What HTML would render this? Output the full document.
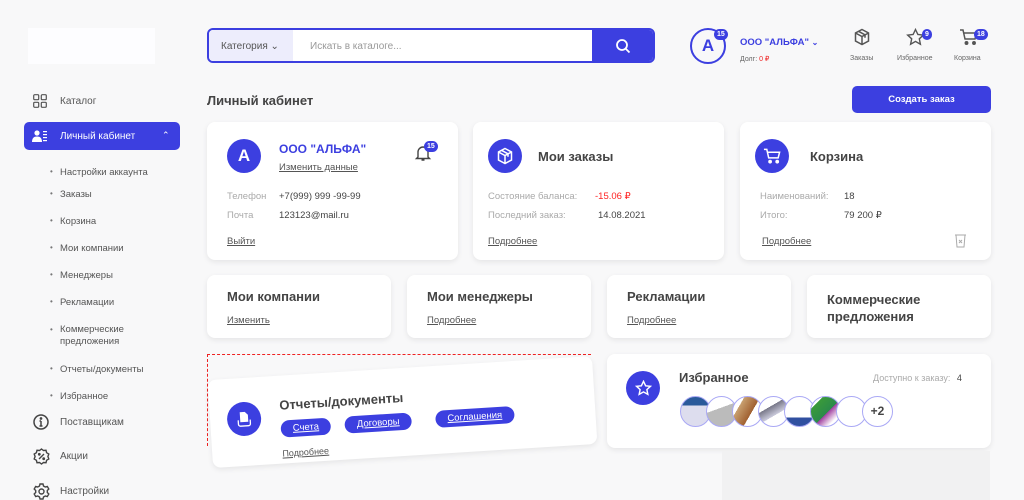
<!DOCTYPE html>
<html><head><meta charset="utf-8"><style>
*{margin:0;padding:0;box-sizing:border-box}
body{width:1024px;height:500px;overflow:hidden;background:#f8f8f9;font-family:"Liberation Sans",sans-serif;color:#444;position:relative;font-size:10px}
.a{position:absolute}
.card{position:absolute;background:#fff;border-radius:8px;box-shadow:0 2px 6px rgba(0,0,0,.08)}
.blue{color:#3c3fe0}
.u{text-decoration:underline;color:#555}
.circ{position:absolute;width:34px;height:34px;border-radius:50%;background:#3c3fe0;display:flex;align-items:center;justify-content:center;color:#fff}
.h{font-size:13px;font-weight:bold;color:#444}
.g{color:#aaa}
.badge{position:absolute;background:#3c3fe0;color:#fff;font-size:7px;font-weight:bold;border-radius:7px;padding:1px 3px;line-height:9px}
.sub{position:absolute;left:60px;font-size:9.5px;color:#555}
.sub:before{content:"•";position:absolute;left:-10px;font-size:8px;color:#777}
.pill{display:inline-block;background:#3c3fe0;color:#fff;border-radius:9px;padding:3px 12px;font-size:9.5px;text-decoration:underline;margin-right:10px}
.av{width:31px;height:31px;border-radius:50%;border:1.5px solid #a9a8f5;margin-right:-5px;display:inline-block;background:#eee;position:relative}
</style></head><body>
<div class="a" style="left:28px;top:28px;width:127px;height:36px;background:#fdfdff"></div>
<!-- search -->
<div class="a" style="left:207px;top:28px;width:448px;height:35px;border:2px solid #3c3fe0;border-radius:6px;background:#fff;overflow:hidden">
<div class="a" style="left:0;top:0;width:84px;height:31px;background:#ededfc;font-size:10px;color:#555;padding:11px 0 0 12px">Категория ⌄</div>
<div class="a" style="left:101px;top:11px;color:#999;font-size:10px">Искать в каталоге...</div>
<div class="a" style="right:0;top:0;width:61px;height:31px;background:#3c3fe0">
<svg class="a" style="left:23px;top:8px" width="16" height="16" viewBox="0 0 16 16"><circle cx="7" cy="7" r="5" fill="none" stroke="#fff" stroke-width="1.8"/><path d="M11 11l3.5 3.5" stroke="#fff" stroke-width="1.8"/></svg></div>
</div>
<!-- header user -->
<div class="a" style="left:690px;top:28px;width:36px;height:36px;border:2px solid #3c3fe0;border-radius:50%;color:#3c3fe0;font-size:17px;font-weight:bold;text-align:center;line-height:32px">A</div>
<div class="badge" style="left:714px;top:29px">15</div>
<div class="a blue" style="left:740px;top:37px;font-size:9.5px;font-weight:bold">ООО "АЛЬФА" <span style="font-size:8px">⌄</span></div>
<div class="a" style="left:740px;top:55px;font-size:7px;color:#666">Долг: <span style="color:#e22">0 ₽</span></div>
<svg class="a" style="left:853px;top:28px" width="18" height="18" viewBox="0 0 18 18" fill="none" stroke="#555" stroke-width="1.5"><path d="M9 1.5l6.5 3.5v8L9 16.5 2.5 13V5z M2.5 5L9 8.5l6.5-3.5 M9 8.5v8 M5.5 3.3l6.5 3.5v3"/></svg>
<div class="a" style="left:850px;top:55px;font-size:7px;color:#666">Заказы</div>
<svg class="a" style="left:906px;top:28px" width="19" height="18" viewBox="0 0 19 18" fill="none" stroke="#555" stroke-width="1.4"><path d="M9.5 1.5l2.4 5 5.4.6-4 3.7 1.1 5.4-4.9-2.8-4.9 2.8 1.1-5.4-4-3.7 5.4-.6z"/></svg>
<div class="badge" style="left:922px;top:29px">9</div>
<div class="a" style="left:897px;top:55px;font-size:7px;color:#666">Избранное</div>
<svg class="a" style="left:959px;top:28px" width="19" height="18" viewBox="0 0 19 18" fill="none" stroke="#555" stroke-width="1.5"><path d="M1 2h3l2 9h10l1.5-6H5"/><circle cx="7.5" cy="15" r="1.2" fill="#555"/><circle cx="15" cy="15" r="1.2" fill="#555"/></svg>
<div class="badge" style="left:974px;top:29px">18</div>
<div class="a" style="left:954px;top:55px;font-size:7px;color:#666">Корзина</div>
<!-- sidebar -->
<svg class="a" style="left:33px;top:94px" width="14" height="14" viewBox="0 0 14 14" fill="none" stroke="#555" stroke-width="1.2"><rect x=".7" y=".7" width="5" height="5" rx="1"/><rect x="8.3" y=".7" width="5" height="5" rx="1"/><rect x=".7" y="8.3" width="5" height="5" rx="1"/><rect x="8.3" y="8.3" width="5" height="5" rx="1"/></svg>
<div class="a" style="left:60px;top:96px;font-size:10px;color:#555">Каталог</div>
<div class="a" style="left:24px;top:122px;width:156px;height:28px;background:#3c3fe0;border-radius:5px;color:#fff">
<svg class="a" style="left:8px;top:8px" width="15" height="12" viewBox="0 0 15 12" fill="#fff"><circle cx="5" cy="3" r="2.6"/><path d="M0 12c0-4 2-5.5 5-5.5s5 1.5 5 5.5z"/><rect x="11" y="1" width="4" height="1.2"/><rect x="11" y="4" width="4" height="1.2"/><rect x="11" y="7" width="4" height="1.2"/><rect x="11" y="10" width="4" height="1.2"/></svg>
<div class="a" style="left:36px;top:9px;font-size:10px">Личный кабинет</div>
<div class="a" style="left:138px;top:8px;font-size:9px">⌃</div></div>
<div class="sub" style="top:167px">Настройки аккаунта</div>
<div class="sub" style="top:189px">Заказы</div>
<div class="sub" style="top:216px">Корзина</div>
<div class="sub" style="top:243px">Мои компании</div>
<div class="sub" style="top:270px">Менеджеры</div>
<div class="sub" style="top:297px">Рекламации</div>
<div class="sub" style="top:324px;line-height:12px">Коммерческие<br>предложения</div>
<div class="sub" style="top:364px">Отчеты/документы</div>
<div class="sub" style="top:391px">Избранное</div>
<svg class="a" style="left:33px;top:414px" width="16" height="16" viewBox="0 0 16 16" fill="none" stroke="#444" stroke-width="1.5"><circle cx="8" cy="8" r="7"/><path d="M8 7v5M6.5 7H8M6.5 12h3"/><circle cx="8" cy="4.5" r=".6" fill="#444"/></svg>
<div class="a" style="left:60px;top:417px;font-size:10px;color:#555">Поставщикам</div>
<svg class="a" style="left:33px;top:448px" width="17" height="17" viewBox="0 0 17 17" fill="none" stroke="#444" stroke-width="1.4"><path d="M8.5 1l2 1.5 2.5-.2.6 2.4 2.2 1.3-.9 2.5.9 2.5-2.2 1.3-.6 2.4-2.5-.2-2 1.5-2-1.5-2.5.2-.6-2.4L1.2 11l.9-2.5L1.2 6l2.2-1.3.6-2.4 2.5.2z M6 11l5-5"/><circle cx="6.3" cy="6.3" r=".7"/><circle cx="10.7" cy="10.7" r=".7"/></svg>
<div class="a" style="left:60px;top:451px;font-size:10px;color:#555">Акции</div>
<svg class="a" style="left:33px;top:483px" width="17" height="17" viewBox="0 0 17 17" fill="none" stroke="#444" stroke-width="1.4"><circle cx="8.5" cy="8.5" r="2.5"/><path d="M7 1h3l.5 2 1.8 1 2-.6 1.5 2.6-1.5 1.5v2l1.5 1.5-1.5 2.6-2-.6-1.8 1-.5 2H7l-.5-2-1.8-1-2 .6L1.2 11l1.5-1.5v-2L1.2 6l1.5-2.6 2 .6 1.8-1z"/></svg>
<div class="a" style="left:60px;top:486px;font-size:10px;color:#555">Настройки</div>
<!-- title -->
<div class="a h" style="left:207px;top:93px">Личный кабинет</div>
<div class="a" style="left:852px;top:86px;width:139px;height:27px;background:#3c3fe0;border-radius:5px;color:#fff;font-size:9.5px;font-weight:bold;text-align:center;line-height:27px">Создать заказ</div>
<!-- row 1 -->
<div class="card" style="left:207px;top:122px;width:251px;height:138px">
<div class="circ" style="left:20px;top:17px;font-size:17px;font-weight:bold">A</div>
<div class="a blue" style="left:72px;top:20px;font-size:12px;font-weight:bold">ООО "АЛЬФА"</div>
<div class="a u" style="left:72px;top:40px;font-size:9.5px">Изменить данные</div>
<svg class="a" style="left:207px;top:22px" width="18" height="18" viewBox="0 0 18 18" fill="none" stroke="#444" stroke-width="1.4"><path d="M4 13V8a5 5 0 0110 0v5l1.5 1.5h-13z M7.5 16h3"/></svg>
<div class="badge" style="left:217px;top:19px">15</div>
<div class="a g" style="left:20px;top:69px;font-size:9.5px">Телефон</div>
<div class="a" style="left:72px;top:69px;font-size:9.5px">+7(999) 999 -99-99</div>
<div class="a g" style="left:20px;top:88px;font-size:9.5px">Почта</div>
<div class="a" style="left:72px;top:88px;font-size:9.5px">123123@mail.ru</div>
<div class="a u" style="left:20px;top:114px;font-size:9.5px">Выйти</div></div>
<div class="card" style="left:473px;top:122px;width:251px;height:138px">
<div class="circ" style="left:15px;top:17px"><svg width="18" height="18" viewBox="0 0 18 18" fill="none" stroke="#fff" stroke-width="1.5"><path d="M9 1.5l6.5 3.5v8L9 16.5 2.5 13V5z M2.5 5L9 8.5l6.5-3.5 M9 8.5v8 M5.5 3.3l6.5 3.5v3"/></svg></div>
<div class="a h" style="left:65px;top:27px">Мои заказы</div>
<div class="a g" style="left:15px;top:69px;font-size:9.5px">Состояние баланса:</div>
<div class="a" style="left:122px;top:69px;font-size:9.5px;color:#f22">-15.06 ₽</div>
<div class="a g" style="left:15px;top:88px;font-size:9.5px">Последний заказ:</div>
<div class="a" style="left:125px;top:88px;font-size:9.5px">14.08.2021</div>
<div class="a u" style="left:15px;top:114px;font-size:9.5px">Подробнее</div></div>
<div class="card" style="left:740px;top:122px;width:251px;height:138px">
<div class="circ" style="left:15px;top:17px"><svg width="18" height="18" viewBox="0 0 19 18" fill="none" stroke="#fff" stroke-width="1.6"><path d="M1 2h3l2 9h10l1.5-6H5"/><circle cx="7.5" cy="15" r="1.2" fill="#fff"/><circle cx="15" cy="15" r="1.2" fill="#fff"/></svg></div>
<div class="a h" style="left:70px;top:27px">Корзина</div>
<div class="a g" style="left:20px;top:69px;font-size:9.5px">Наименований:</div>
<div class="a" style="left:104px;top:69px;font-size:9.5px">18</div>
<div class="a g" style="left:20px;top:88px;font-size:9.5px">Итого:</div>
<div class="a" style="left:104px;top:88px;font-size:9.5px">79 200 ₽</div>
<div class="a u" style="left:22px;top:114px;font-size:9.5px">Подробнее</div>
<svg class="a" style="left:214px;top:111px" width="13" height="15" viewBox="0 0 13 15" fill="none" stroke="#aaa" stroke-width="1"><path d="M1 2h11M2 2l1 12h7l1-12M5 7l3 3M8 7l-3 3"/></svg></div>
<!-- row 2 -->
<div class="card" style="left:207px;top:275px;width:184px;height:63px"><div class="a h" style="left:20px;top:14px">Мои компании</div><div class="a u" style="left:20px;top:40px;font-size:9.5px">Изменить</div></div>
<div class="card" style="left:407px;top:275px;width:184px;height:63px"><div class="a h" style="left:20px;top:14px">Мои менеджеры</div><div class="a u" style="left:20px;top:40px;font-size:9.5px">Подробнее</div></div>
<div class="card" style="left:607px;top:275px;width:184px;height:63px"><div class="a h" style="left:20px;top:14px">Рекламации</div><div class="a u" style="left:20px;top:40px;font-size:9.5px">Подробнее</div></div>
<div class="card" style="left:807px;top:275px;width:184px;height:63px"><div class="a h" style="left:20px;top:16px;line-height:17px">Коммерческие<br>предложения</div></div>
<!-- row 3 -->
<div class="a" style="left:207px;top:354px;width:384px;height:92px;border:1px dashed #e22;border-right:none;border-bottom:none"></div>
<div class="card" style="left:210px;top:368px;width:385px;height:88px;transform:rotate(-3.6deg);transform-origin:center">
<div class="circ" style="left:17px;top:24px"><svg width="14" height="16" viewBox="0 0 14 16" fill="#fff"><path d="M3 1h5l3 3v7H3z"/><path d="M1 9v4a2 2 0 002 2h8a2 2 0 002-2V9" fill="none" stroke="#fff" stroke-width="1.3"/></svg></div>
<div class="a h" style="left:70px;top:22px">Отчеты/документы</div>
<div class="a" style="left:70px;top:45px"><span class="pill">Счета</span><span class="pill" style="margin-left:4px">Договоры</span><span class="pill" style="margin-left:14px">Соглашения</span></div>
<div class="a u" style="left:70px;top:73px;font-size:9px">Подробнее</div></div>
<div class="card" style="left:607px;top:354px;width:384px;height:94px">
<div class="circ" style="left:19px;top:17px"><svg width="17" height="16" viewBox="0 0 19 18" fill="none" stroke="#fff" stroke-width="1.6"><path d="M9.5 1.5l2.4 5 5.4.6-4 3.7 1.1 5.4-4.9-2.8-4.9 2.8 1.1-5.4-4-3.7 5.4-.6z"/></svg></div>
<div class="a h" style="left:72px;top:16px">Избранное</div>
<div class="a g" style="left:266px;top:19px;font-size:9px">Доступно к заказу: <span style="color:#444;margin-left:4px">4</span></div>
<div class="a" style="left:73px;top:42px;display:flex">
<span class="av" style="background:linear-gradient(#2a5a9a 30%,#dde 30%)"></span><span class="av" style="background:linear-gradient(160deg,#fff 40%,#bbb 40%)"></span><span class="av" style="background:linear-gradient(120deg,#fff 25%,#c8a070 25%,#a06030 60%,#fff 60%)"></span><span class="av" style="background:linear-gradient(150deg,#fff 35%,#778 35%,#ccd 60%,#fff 60%)"></span><span class="av" style="background:linear-gradient(#fff 70%,#3050a0 70%)"></span><span class="av" style="background:linear-gradient(135deg,#fff 20%,#3a9a3a 20%,#2a8a4a 55%,#a040a0 55%,#fff 80%)"></span><span class="av" style="background:#fff"></span><span class="av" style="background:#fff;text-align:center;line-height:28px;font-size:12px;font-weight:bold;color:#444">+2</span></div></div>
<div class="a" style="left:722px;top:451px;width:268px;height:49px;background:#f1f1f2"></div>
</body></html>
